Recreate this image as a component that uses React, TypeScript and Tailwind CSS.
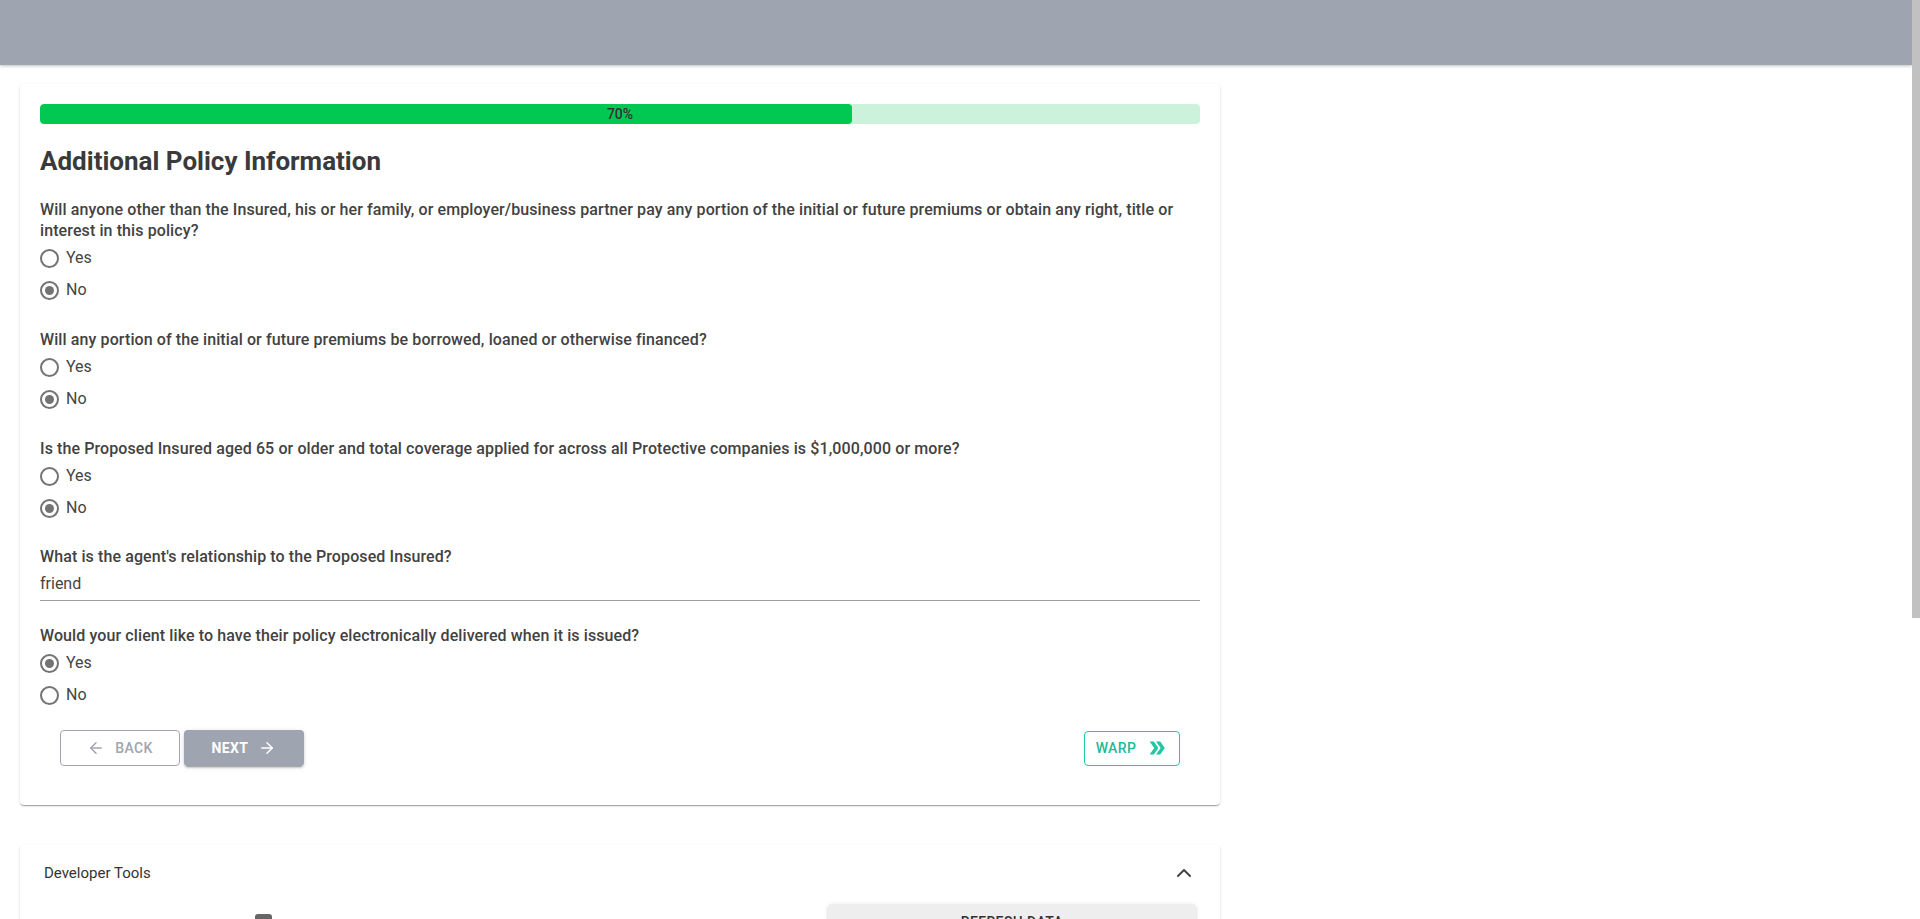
import { ArrowLeft, ArrowRight, ChevronUp } from "lucide-react";

const font = { fontFamily: "Roboto, 'Noto Sans', sans-serif" };

interface RadioGroupProps {
  question: string;
  value: "Yes" | "No";
  last?: boolean;
}

function Radio({ checked }: { checked: boolean }) {
  return (
    <span className="w-[19px] h-[19px] rounded-full border-2 border-[#737373] flex items-center justify-center">
      {checked && <span className="w-[9px] h-[9px] rounded-full bg-[#737373]" />}
    </span>
  );
}

function RadioQuestion({ question, value, last }: RadioGroupProps) {
  return (
    <div className={last ? "mb-[19px]" : "mb-[23px]"}>
      <p className="text-[16px] leading-[21px] tracking-[0.1px] font-medium text-[#424242]">{question}</p>
      <div className="mt-px">
        {(["Yes", "No"] as const).map((opt) => (
          <label key={opt} className="h-8 flex items-center gap-[7px] cursor-pointer">
            <Radio checked={value === opt} />
            <span className="text-[16px] text-[#444]">{opt}</span>
          </label>
        ))}
      </div>
    </div>
  );
}

function DoubleArrow() {
  return (
    <svg viewBox="0 0 24 24" className="w-[22px] h-[22px] fill-[#1fc8a0]">
      <path d="M15.5 5H11l5 7-5 7h4.5l5-7z" />
      <path d="M8.5 5H4l5 7-5 7h4.5l5-7z" />
    </svg>
  );
}

const raised =
  "shadow-[0_3px_1px_-2px_rgba(0,0,0,0.2),0_2px_2px_0_rgba(0,0,0,0.14),0_1px_5px_0_rgba(0,0,0,0.12)]";
const paper =
  "shadow-[0_2px_1px_-1px_rgba(0,0,0,0.2),0_1px_1px_0_rgba(0,0,0,0.14),0_1px_3px_0_rgba(0,0,0,0.12)]";

export default function App() {
  return (
    <div className="h-screen flex overflow-hidden bg-white" style={font}>
      <div className="flex-1 overflow-y-auto [scrollbar-width:none]">
        <header className="h-[65px] bg-[#9ea4b0] shadow-[0_1px_3px_rgba(0,0,0,0.25)]" />

        <main className="pl-5 pt-[19px] pb-5">
          <section className={`w-[1200px] bg-white rounded px-5 pt-5 pb-[39px] ${paper}`}>
            <div className="relative h-5 rounded bg-[#ccf2dc] overflow-hidden">
              <div className="h-full w-[70%] bg-[#00c853] rounded" />
              <span className="absolute inset-0 flex items-center justify-center text-[14px] font-medium text-[#333]">
                70%
              </span>
            </div>

            <h1 className="mt-[21px] mb-[22px] text-[26px] leading-8 font-bold text-[#3a3a3a]">
              Additional Policy Information
            </h1>

            <RadioQuestion
              question="Will anyone other than the Insured, his or her family, or employer/business partner pay any portion of the initial or future premiums or obtain any right, title or interest in this policy?"
              value="No"
            />
            <RadioQuestion
              question="Will any portion of the initial or future premiums be borrowed, loaned or otherwise financed?"
              value="No"
            />
            <RadioQuestion
              question="Is the Proposed Insured aged 65 or older and total coverage applied for across all Protective companies is $1,000,000 or more?"
              value="No"
            />

            <div className="-mt-px mb-6">
              <p className="text-[16px] leading-[21px] tracking-[0.1px] font-medium text-[#424242]">
                What is the agent's relationship to the Proposed Insured?
              </p>
              <div className="mt-[6px] pb-[5px] border-b border-[#9e9e9e] text-[16px] leading-[22px] text-[#444]">
                friend
              </div>
            </div>

            <RadioQuestion
              question="Would your client like to have their policy electronically delivered when it is issued?"
              value="Yes"
              last
            />

            <div className="px-5 flex items-center">
              <button className="w-[120px] h-9 flex items-center justify-center gap-[10px] rounded border border-[#a0a5b0] text-[#a0a5b0] text-[14px] font-medium tracking-[0.4px]">
                <ArrowLeft className="w-[18px] h-[18px]" strokeWidth={2} />
                BACK
              </button>
              <button className={`ml-1 w-[120px] h-9 flex items-center justify-center gap-[10px] rounded bg-[#9ea4b0] text-white text-[14px] font-bold tracking-[0.4px] ${raised}`}>
                NEXT
                <ArrowRight className="w-[18px] h-[18px]" strokeWidth={2} />
              </button>
              <button className="ml-auto w-[96px] h-[35px] flex items-center justify-center gap-[10px] rounded border border-[#1fc8a0] text-[#1fb99a] text-[14px] font-medium tracking-[0.4px]">
                WARP
                <DoubleArrow />
              </button>
            </div>
          </section>

          <section className={`mt-10 w-[1200px] bg-white rounded ${paper}`}>
            <div className="h-14 px-6 flex items-center justify-between">
              <span className="text-[15px] text-[#333]">Developer Tools</span>
              <ChevronUp className="w-6 h-6 text-[#444]" strokeWidth={2} />
            </div>
            <div className="px-6 pb-6 flex items-start h-[440px]">
              <div className="pl-[211px] pt-[13px]">
                <span className="block w-[17px] h-[17px] rounded-[3px] bg-[#666]" />
              </div>
              <div className="ml-auto w-[368px] flex flex-col gap-3">
                <button className={`h-9 mt-[3px] rounded bg-[#eeeeee] text-[14px] font-medium text-[#333] tracking-[0.4px] ${raised}`}>
                  REFRESH DATA
                </button>
                <button className={`h-9 rounded bg-[#eeeeee] text-[14px] font-medium text-[#333] tracking-[0.4px] ${raised}`}>
                  CLEAR STORAGE
                </button>
              </div>
            </div>
          </section>
        </main>
      </div>

      {/* scrollbar track */}
      <div className="w-2 shrink-0 bg-white">
        <div className="h-[618px] bg-[#c1c1c1]" />
      </div>
    </div>
  );
}
